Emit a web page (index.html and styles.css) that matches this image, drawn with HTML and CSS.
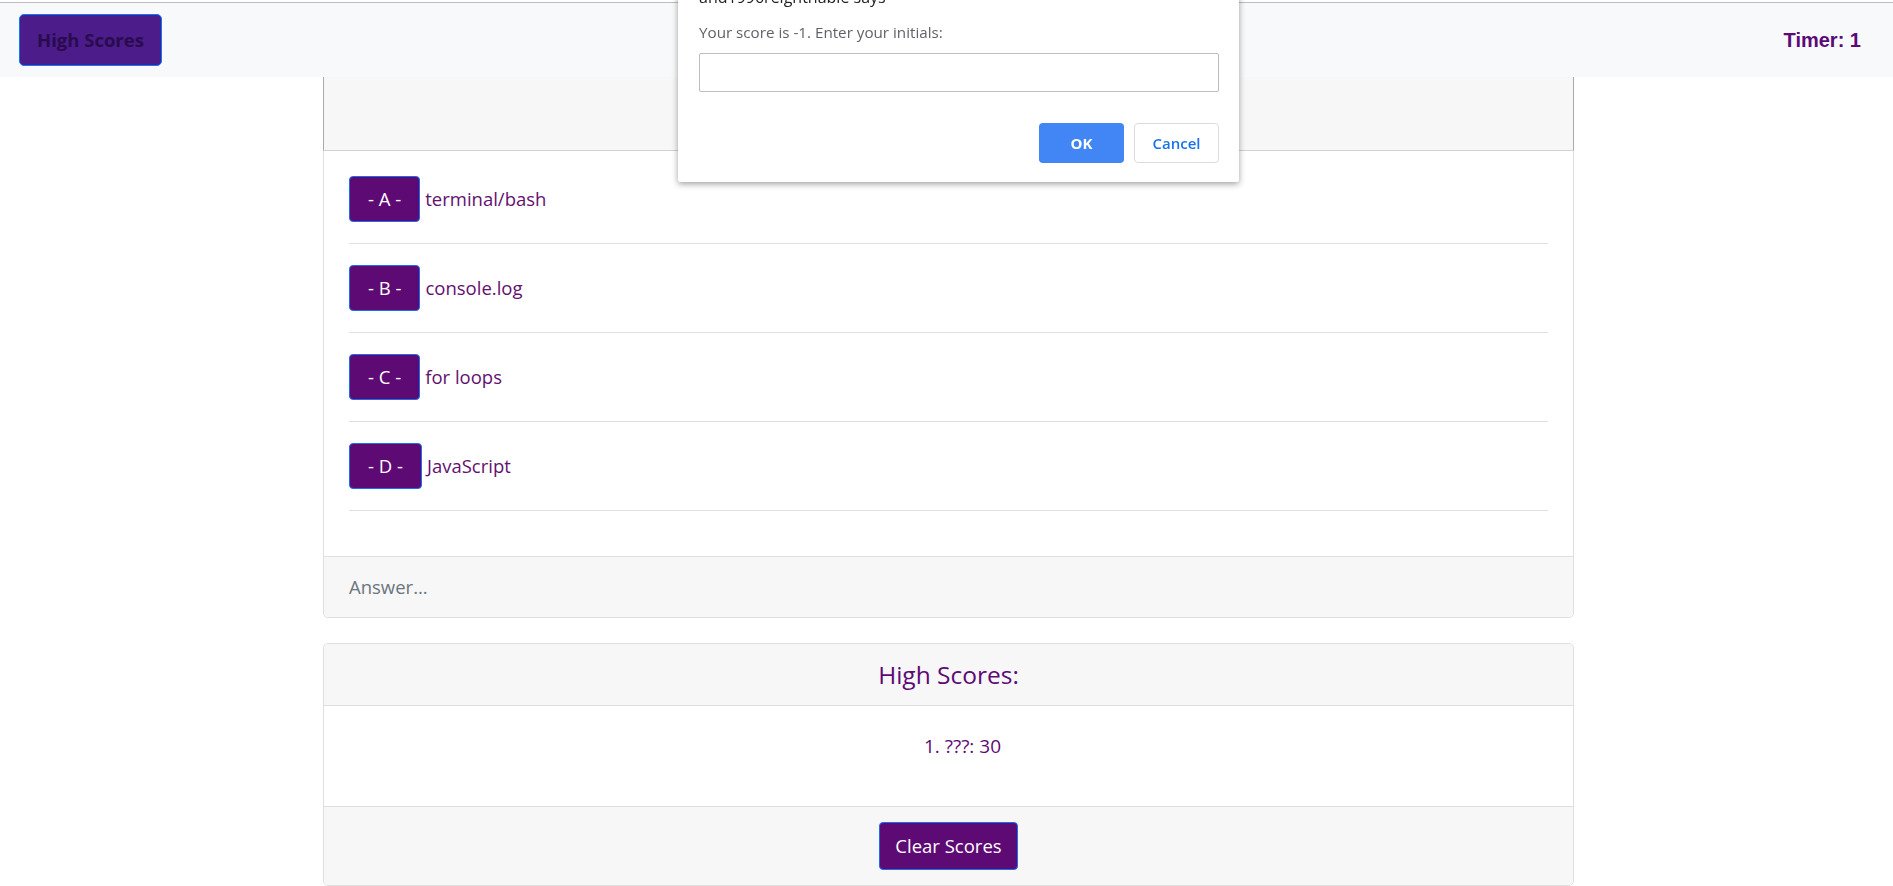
FILE: index.html
```html
<!DOCTYPE html>
<html lang="en">
<head>
<meta charset="utf-8">
<title>Code Quiz</title>
<link rel="stylesheet" href="styles.css">
</head>
<body>
<nav class="navbar">
  <button class="btn-highscores" type="button">High Scores</button>
  <span class="timer">Timer: 1</span>
</nav>

<main class="main">
  <section class="card quiz-card">
    <div class="card-header quiz-header"></div>
    <div class="card-body">
      <ul class="answers">
        <li class="answer"><button class="btn-answer" type="button">- A -</button><span class="answer-text">terminal/bash</span></li>
        <li class="answer"><button class="btn-answer" type="button">- B -</button><span class="answer-text">console.log</span></li>
        <li class="answer"><button class="btn-answer" type="button">- C -</button><span class="answer-text">for loops</span></li>
        <li class="answer"><button class="btn-answer" type="button">- D -</button><span class="answer-text">JavaScript</span></li>
      </ul>
    </div>
    <div class="card-footer result">Answer...</div>
  </section>

  <section class="card scores-card">
    <div class="card-header scores-header"><h5 class="scores-title">High Scores:</h5></div>
    <div class="card-body scores-body"><p class="score-line">1. ???: 30</p></div>
    <div class="card-footer scores-footer"><button class="btn-clear" type="button">Clear Scores</button></div>
  </section>
</main>

<div class="dialog">
  <div class="dialog-title">and1996reighthable says</div>
  <div class="dialog-msg">Your score is -1. Enter your initials:</div>
  <input class="dialog-input" type="text">
  <div class="dialog-actions">
    <button class="dlg-btn dlg-ok" type="button">OK</button>
    <button class="dlg-btn dlg-cancel" type="button">Cancel</button>
  </div>
</div>
</body>
</html>
```

FILE: styles.css
```css
* { box-sizing: border-box; }

html, body {
  margin: 0;
  padding: 0;
  background: #ffffff;
}

body {
  font-family: "Open Sans", "Noto Sans", sans-serif;
  font-size: 18.5px;
  line-height: 30px;
  color: #212529;
}

/* ---------- navbar (fixed, overlays the page) ---------- */
.navbar {
  position: fixed;
  top: 2px;
  left: 0;
  right: 0;
  height: 75px;
  border-top: 1px solid #bdbdbd;
  background: #f8f9fa;
  display: flex;
  align-items: center;
  justify-content: space-between;
  padding: 0 32px 0 19px;
  z-index: 10;
}

.btn-highscores {
  height: 52px;
  padding: 0 17px;
  background: #4b1c8a;
  color: #2a0b4d;
  border: 1px solid #0a7bff;
  border-radius: 5px;
  font-family: "Open Sans", "Noto Sans", sans-serif;
  font-weight: 700;
  font-size: 18.5px;
  line-height: 30px;
}

.timer {
  font-family: "Liberation Sans", Arial, sans-serif;
  font-weight: 700;
  font-size: 20px;
  color: #5c0a78;
}

/* ---------- main column ---------- */
.main {
  padding: 40px 0 0 4px;
}

.card {
  width: 1251px;
  margin: 0 auto;
  background: #fff;
  border: 1px solid #dfdfdf;
  border-radius: 5px;
}

.card-header {
  background: #f7f7f7;
  border-bottom: 1px solid #dfdfdf;
}

.card-body {
  padding: 25px;
}

.card-footer {
  background: #f7f7f7;
  border-top: 1px solid #dfdfdf;
  padding: 15px 25px;
  border-radius: 0 0 5px 5px;
}

/* quiz card */
.quiz-header {
  height: 110px;
  margin: 0 -1px;
  border-left: 1px solid #ababab;
  border-right: 1px solid #ababab;
  border-bottom-color: #d2d2d2;
}

.answers {
  list-style: none;
  margin: 0 0 20px;
  padding: 0;
}

.answer {
  display: flex;
  align-items: center;
  padding: 21px 0;
  border-bottom: 1px solid #dfdfdf;
}

.answer:first-child {
  padding-top: 0;
}

.btn-answer {
  height: 46px;
  padding: 0 18px;
  margin-right: 5px;
  background: #5e0a74;
  color: #ffffff;
  border: 1px solid #1a6ff0;
  border-radius: 4px;
  font-family: "Open Sans", "Noto Sans", sans-serif;
  font-size: 18.5px;
  line-height: 30px;
}

.answer-text {
  color: #63106f;
}

.result {
  color: #6c757d;
}

/* high scores card */
.scores-card {
  margin-top: 25px;
}

.scores-header {
  padding: 16px 25px 15px;
  text-align: center;
  border-radius: 5px 5px 0 0;
}

.scores-title {
  margin: 0;
  font-size: 24.5px;
  font-weight: 400;
  line-height: 30px;
  color: #5e0a74;
}

.score-line {
  margin: 0 0 20px;
  padding-left: 28px;
  text-align: center;
  font-size: 19px;
  color: #5e0a74;
}

.scores-footer {
  text-align: center;
}

.btn-clear {
  height: 48px;
  padding: 0 15px;
  background: #5e0a74;
  color: #ffffff;
  border: 1px solid #1a6ff0;
  border-radius: 4px;
  font-family: "Open Sans", "Noto Sans", sans-serif;
  font-size: 18.5px;
  line-height: 30px;
  vertical-align: top;
}

/* ---------- browser prompt dialog (overlay) ---------- */
.dialog {
  position: fixed;
  top: -14px;
  left: 678px;
  width: 561px;
  padding: 0 20px 19px 21px;
  background: #ffffff;
  border-radius: 0 0 2px 2px;
  box-shadow: 0 2px 6px rgba(0, 0, 0, 0.38);
  z-index: 20;
  font-family: "Open Sans", "Noto Sans", sans-serif;
}

.dialog-title {
  font-size: 16px;
  line-height: 22px;
  color: #202124;
}

.dialog-msg {
  margin-top: 14px;
  font-size: 15.2px;
  line-height: 20px;
  color: #5f6368;
}

.dialog-input {
  display: block;
  width: 100%;
  height: 39px;
  margin-top: 11px;
  border: 1px solid #bdbdbd;
  border-radius: 2px;
  background: #fff;
}

.dialog-actions {
  display: flex;
  justify-content: flex-end;
  gap: 10px;
  margin-top: 31px;
}

.dlg-btn {
  width: 85px;
  height: 40px;
  border-radius: 4px;
  font-family: "Open Sans", "Noto Sans", sans-serif;
  font-size: 15px;
}

.dlg-ok {
  background: #4285f4;
  color: #ffffff;
  border: none;
  font-weight: 700;
}

.dlg-cancel {
  background: #ffffff;
  color: #1a73e8;
  border: 1px solid #dadce0;
  font-weight: 600;
}
```
